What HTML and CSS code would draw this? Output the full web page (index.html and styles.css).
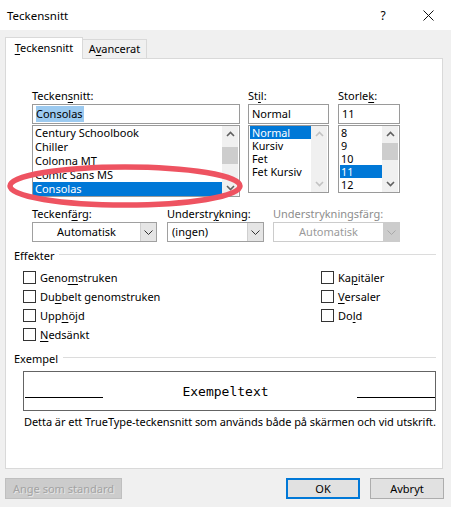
FILE: index.html
```html
<!DOCTYPE html>
<html lang="sv">
<head>
<meta charset="utf-8">
<title>Teckensnitt</title>
<link rel="stylesheet" href="styles.css">
</head>
<body>
<div class="titlebar">
  <span class="title">Teckensnitt</span>
  <span class="help">?</span>
  <span class="close"><svg width="11" height="11" viewBox="0 0 11 11"><path d="M0.5 0.5L10.5 10.5M10.5 0.5L0.5 10.5" stroke="#111" stroke-width="1" fill="none"/></svg></span>
</div>

<div class="tabs">
  <div class="tab active"><u>T</u>eckensnitt</div>
  <div class="tab">A<u>v</u>ancerat</div>
</div>

<div class="panel">
  <div class="fontgrid">
    <div class="col col-font">
      <div class="label">Tecken<u>s</u>nitt:</div>
      <div class="input"><span class="sel">Consolas</span></div>
      <div class="list list-font">
        <div class="rows">
          <div class="row">Century Schoolbook</div>
          <div class="row">Chiller</div>
          <div class="row">Colonna MT</div>
          <div class="row">Comic Sans MS</div>
          <div class="row selected">Consolas</div>
        </div>
        <div class="scrollbar">
          <div class="sb-btn"><svg width="9" height="6" viewBox="0 0 9 6"><path d="M1 5L4.5 1.5L8 5" stroke="#606060" stroke-width="1.6" fill="none"/></svg></div>
          <div class="thumb thumb-font"></div>
          <div class="sb-spacer"></div>
          <div class="sb-btn"><svg width="9" height="6" viewBox="0 0 9 6"><path d="M1 1L4.5 4.5L8 1" stroke="#606060" stroke-width="1.6" fill="none"/></svg></div>
        </div>
      </div>
    </div>
    <div class="col col-style">
      <div class="label">St<u>i</u>l:</div>
      <div class="input">Normal</div>
      <div class="list list-small">
        <div class="rows rows-small">
          <div class="row selected">Normal</div>
          <div class="row">Kursiv</div>
          <div class="row">Fet</div>
          <div class="row">Fet Kursiv</div>
        </div>
        <div class="scrollbar">
          <div class="sb-btn"><svg width="9" height="6" viewBox="0 0 9 6"><path d="M1 5L4.5 1.5L8 5" stroke="#c2c2c2" stroke-width="1.6" fill="none"/></svg></div>
          <div class="sb-spacer"></div>
          <div class="sb-btn"><svg width="9" height="6" viewBox="0 0 9 6"><path d="M1 1L4.5 4.5L8 1" stroke="#c2c2c2" stroke-width="1.6" fill="none"/></svg></div>
        </div>
      </div>
    </div>
    <div class="col col-size">
      <div class="label">Storle<u>k</u>:</div>
      <div class="input">11</div>
      <div class="list list-small">
        <div class="rows rows-small rows-size">
          <div class="row">8</div>
          <div class="row">9</div>
          <div class="row">10</div>
          <div class="row selected">11</div>
          <div class="row">12</div>
        </div>
        <div class="scrollbar">
          <div class="sb-btn"><svg width="9" height="6" viewBox="0 0 9 6"><path d="M1 5L4.5 1.5L8 5" stroke="#606060" stroke-width="1.6" fill="none"/></svg></div>
          <div class="thumb thumb-size"></div>
          <div class="sb-spacer"></div>
          <div class="sb-btn"><svg width="9" height="6" viewBox="0 0 9 6"><path d="M1 1L4.5 4.5L8 1" stroke="#606060" stroke-width="1.6" fill="none"/></svg></div>
        </div>
      </div>
    </div>
  </div>

  <div class="dropgrid">
    <div class="dcol dcol-color">
      <div class="label">Teckenf<u>ä</u>rg:</div>
      <div class="dropdown">
        <span class="dd-text center">Automatisk</span>
        <span class="dd-btn"><svg width="9" height="5" viewBox="0 0 9 5"><path d="M0.5 0.5L4.5 4.5L8.5 0.5" stroke="#333" stroke-width="1" fill="none"/></svg></span>
      </div>
    </div>
    <div class="dcol dcol-under">
      <div class="label">Understr<u>y</u>kning:</div>
      <div class="dropdown">
        <span class="dd-text">(ingen)</span>
        <span class="dd-btn"><svg width="9" height="5" viewBox="0 0 9 5"><path d="M0.5 0.5L4.5 4.5L8.5 0.5" stroke="#333" stroke-width="1" fill="none"/></svg></span>
      </div>
    </div>
    <div class="dcol dcol-ucolor">
      <div class="label disabled">Understrykningsfärg:</div>
      <div class="dropdown dd-disabled">
        <span class="dd-text center">Automatisk</span>
        <span class="dd-btn"><svg width="9" height="5" viewBox="0 0 9 5"><path d="M0.5 0.5L4.5 4.5L8.5 0.5" stroke="#a8a8a8" stroke-width="1" fill="none"/></svg></span>
      </div>
    </div>
  </div>

  <div class="group-head">
    <span class="group-label">Effekter</span>
    <span class="group-line"></span>
  </div>
  <div class="effects">
    <div class="eff-col">
      <div class="check"><span class="box"></span>Geno<u>m</u>struken</div>
      <div class="check"><span class="box"></span>Du<u>b</u>belt genomstruken</div>
      <div class="check"><span class="box"></span>Upp<u>h</u>öjd</div>
      <div class="check"><span class="box"></span><u>N</u>edsänkt</div>
    </div>
    <div class="eff-col">
      <div class="check"><span class="box"></span>Ka<u>p</u>itäler</div>
      <div class="check"><span class="box"></span><u>V</u>ersaler</div>
      <div class="check"><span class="box"></span>Do<u>l</u>d</div>
    </div>
  </div>

  <div class="group-head group-sample">
    <span class="group-label">Exempel</span>
    <span class="group-line"></span>
  </div>
  <div class="preview">
    <span class="pline"></span>
    <span class="ptext">Exempeltext</span>
    <span class="pline"></span>
  </div>
  <div class="desc">Detta är ett TrueType-teckensnitt som används både på skärmen och vid utskrift.</div>
</div>

<div class="footer">
  <div class="btn btn-disabled">Ange som standard</div>
  <div class="spacer"></div>
  <div class="btn btn-default">OK</div>
  <div class="btn">Avbryt</div>
</div>

<svg class="marker" width="451" height="507" viewBox="0 0 451 507">
  <ellipse cx="125" cy="186" rx="115" ry="19" fill="none" stroke="#ee5361" stroke-width="5.5"/>
</svg>
</body>
</html>
```

FILE: styles.css
```css
* { box-sizing: border-box; }

body {
  margin: 0;
  width: 451px;
  height: 507px;
  overflow: hidden;
  position: relative;
  background: #f0f0f0;
  font-family: "Noto Sans", "Liberation Sans", sans-serif;
  font-size: 11px;
  color: #000;
}

u { text-decoration-thickness: 1px; text-underline-offset: 2px; }

/* title bar */
.titlebar {
  height: 30px;
  background: #fff;
  display: flex;
  align-items: center;
  padding-left: 7px;
}
.title { flex: 1; font-size: 11.5px; }
.help { width: 10px; text-align: center; font-size: 12px; margin-right: 35px; }
.close { width: 11px; height: 11px; margin-right: 17px; display: flex; }

/* tabs */
.tabs {
  height: 28px;
  display: flex;
  align-items: flex-end;
  padding-left: 5px;
}
.tab {
  height: 19px;
  width: 64px;
  border: 1px solid #d9d9d9;
  border-left: none;
  border-bottom: none;
  text-align: center;
  line-height: 18px;
  background: #f0f0f0;
}
.tab.active {
  width: 78px;
  height: 22px;
  margin-bottom: -1px;
  border-left: 1px solid #d9d9d9;
  background: #fff;
  position: relative;
  z-index: 1;
  line-height: 20px;
}

/* panel */
.panel {
  margin-left: 5px;
  width: 438px;
  height: 411px;
  border: 1px solid #d9d9d9;
  background: #fff;
}

.label { height: 15px; line-height: 15px; margin-bottom: 1px; white-space: nowrap; }
.label.disabled { color: #8d8d8d; }

.fontgrid { display: flex; margin: 29px 0 0 26px; }
.col-font { width: 208px; margin-right: 8px; }
.col-style { width: 81px; margin-right: 9px; }
.col-size { width: 62px; }

.input {
  height: 20px;
  border: 1px solid #9a9a9a;
  padding-left: 3px;
  line-height: 18px;
}
.sel { background: #9ccaf0; padding: 0 1px 1px 0; }

.list {
  margin-top: 1px;
  border: 1px solid #9a9a9a;
  display: flex;
  height: 68px;
  padding-left: 1px;
}
.list-font { height: 72px; padding-left: 0; }
.rows { flex: 1; }
.row { height: 14px; line-height: 14px; padding-left: 2px; white-space: nowrap; overflow: hidden; }
.rows-small .row { height: 13px; line-height: 13px; font-size: 10.8px; }
.rows-size .row { padding-left: 1px; }
.row.selected { background: #0078d7; color: #fff; }

.scrollbar {
  width: 16px;
  margin-right: 1px;
  background: #f0f0f0;
  display: flex;
  flex-direction: column;
}
.sb-btn { height: 16px; display: flex; align-items: center; justify-content: center; }
.sb-spacer { flex: 1; }
.thumb { background: #cdcdcd; height: 17px; }
.thumb-font { margin-top: 5px; }
.thumb-size { margin-top: 1px; }

/* dropdowns */
.dropgrid { display: flex; margin: 9px 0 0 26px; }
.dcol-color { width: 125px; margin-right: 10px; }
.dcol-under { width: 97px; margin-right: 9px; }
.dcol-ucolor { width: 127px; }

.dropdown {
  height: 20px;
  border: 1px solid #a0a0a0;
  display: flex;
}
.dd-text { flex: 1; line-height: 18px; padding-left: 4px; }
.dd-text.center { text-align: center; padding-left: 0; }
.dd-btn {
  width: 16px;
  background: #e5e5e5;
  border-left: 1px solid #cfcfcf;
  display: flex;
  align-items: center;
  justify-content: center;
}
.dd-disabled { border-color: #cccccc; color: #9a9a9a; }
.dd-disabled .dd-btn { background: #cccccc; border-left-color: #cccccc; }

/* groups */
.group-head { display: flex; margin: 6px 0 0 8px; height: 15px; line-height: 15px; }
.group-line { flex: 1; height: 1px; background: #dcdcdc; margin: 6px 6px 0 5px; }

.effects { display: flex; margin: 5px 0 0 17px; }
.eff-col:first-child { width: 298px; }
.check { height: 19px; display: flex; align-items: center; }
.box {
  width: 13px;
  height: 13px;
  border: 1px solid #333;
  background: #fff;
  margin-right: 4px;
}

.group-sample { margin-top: 7px; }

.preview {
  margin: 5px 0 0 17px;
  width: 413px;
  height: 40px;
  border: 1px solid #646464;
  display: flex;
  align-items: center;
}
.pline {
  width: 78px;
  height: 1px;
  background: #000;
  align-self: flex-start;
  margin-top: 25px;
  margin-left: 1px;
}
.pline:last-child { margin-left: 0; }
.ptext {
  flex: 1;
  text-align: center;
  padding-right: 9px;
  font-family: "DejaVu Sans Mono", "Liberation Mono", monospace;
  font-size: 13px;
}

.desc { margin: 3px 0 0 18px; height: 15px; line-height: 15px; white-space: nowrap; letter-spacing: -0.06px; }

/* footer */
.footer { display: flex; margin-top: 9px; padding: 0 7px 0 5px; }
.spacer { flex: 1; }
.btn {
  height: 21px;
  width: 74px;
  border: 1px solid #adadad;
  background: #e1e1e1;
  text-align: center;
  line-height: 19px;
  margin-left: 10px;
}
.btn-default { border: 2px solid #0078d7; line-height: 17px; }
.btn-disabled {
  width: 117px;
  margin-left: 0;
  background: #cccccc;
  border-color: #bfbfbf;
  color: #a3a3a3;
  text-shadow: 1px 1px 0 #e6e6e6;
}

.marker { position: absolute; left: 0; top: 0; pointer-events: none; }
```
